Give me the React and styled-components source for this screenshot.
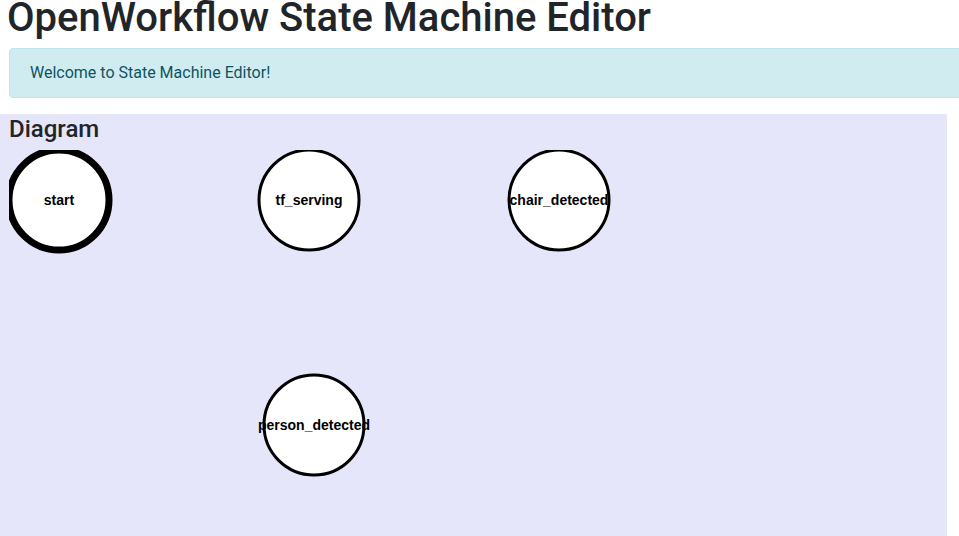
import React from "react";
import styled, { createGlobalStyle } from "styled-components";

const GlobalStyle = createGlobalStyle`
  html, body {
    margin: 0;
    padding: 0;
    overflow: hidden;
    background: #fff;
  }
  body {
    font-family: Roboto, "Liberation Sans", sans-serif;
    color: #212529;
  }
`;

const Page = styled.div`
  width: 959px;
`;

const Title = styled.h1`
  font-size: 40px;
  font-weight: 500;
  line-height: 36px;
  margin: 0 0 12px;
  padding-left: 7px;
  white-space: nowrap;
`;

const Alert = styled.div`
  margin: 0 -30px 16px 9px;
  padding: 12px 20px;
  background: #d1ecf1;
  border: 1px solid #bee5eb;
  border-radius: 4px;
  color: #0c5460;
  font-size: 16px;
  line-height: 24px;
`;

const Panel = styled.section`
  width: 938px;
  padding-left: 9px;
  background: #e6e6fa;
  min-height: 430px;
`;

const PanelTitle = styled.h4`
  font-size: 24px;
  font-weight: 500;
  line-height: 1.2;
  margin: 0;
  padding: 1px 0 6px;
`;

const Canvas = styled.svg`
  display: block;
  overflow: hidden;
`;

const Label = styled.text`
  font-family: "Liberation Sans", Arial, sans-serif;
  font-size: 14px;
  font-weight: bold;
  fill: #000;
`;

const states = [
  { name: "start", x: 50, y: 50, initial: true },
  { name: "tf_serving", x: 300, y: 50 },
  { name: "chair_detected", x: 550, y: 50 },
  { name: "person_detected", x: 305, y: 275 },
];

const StateNode = ({ state }) => (
  <g>
    <circle
      cx={state.x}
      cy={state.y}
      r={50}
      fill="#fff"
      stroke="#000"
      strokeWidth={state.initial ? 7 : 3}
    />
    <Label x={state.x} y={state.y} textAnchor="middle" dy="0.35em">
      {state.name}
    </Label>
  </g>
);

export default function App() {
  return (
    <Page>
      <GlobalStyle />
      <Title>OpenWorkflow State Machine Editor</Title>
      <Alert>Welcome to State Machine Editor!</Alert>
      <Panel>
        <PanelTitle>Diagram</PanelTitle>
        <Canvas width={938} height={400}>
          {states.map((s) => (
            <StateNode key={s.name} state={s} />
          ))}
        </Canvas>
      </Panel>
    </Page>
  );
}
